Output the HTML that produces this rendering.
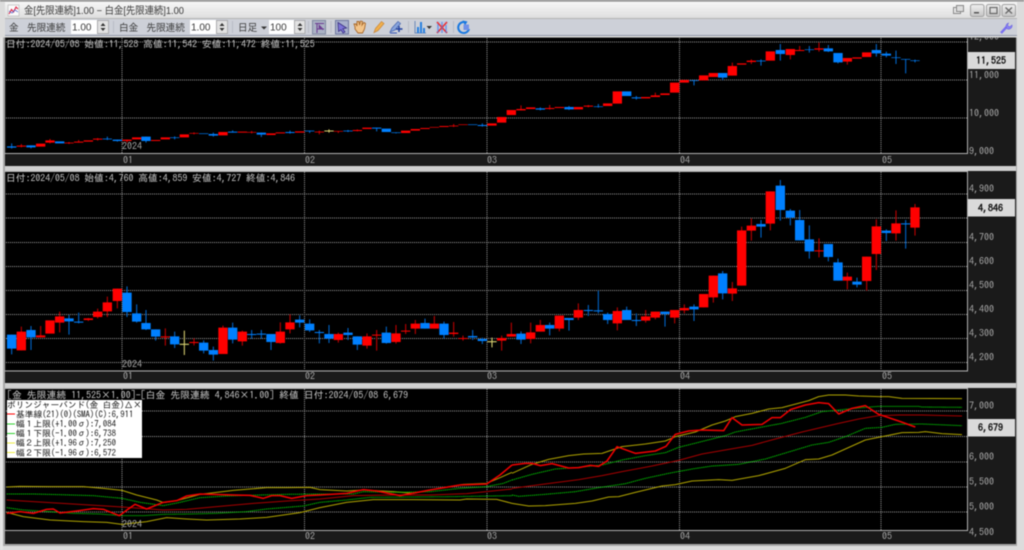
<!DOCTYPE html>
<html lang="ja"><head><meta charset="utf-8"><title>金[先限連続]1.00 − 白金[先限連続]1.00</title>
<style>
html,body{margin:0;padding:0;background:#d8d8d8;width:1024px;height:550px;overflow:hidden}
svg{display:block;filter:blur(.4px)}
.m{font-family:"IPAGothic","Noto Sans CJK JP",monospace;font-size:9.8px;fill:#c8c8c8}
.a{font-family:"IPAGothic","Noto Sans CJK JP",monospace;font-size:10px;fill:#a8a8a8}
.t{font-family:"IPAGothic","Noto Sans CJK JP",monospace;font-size:10px;font-weight:bold;fill:#111}
.u{font-family:"Liberation Sans","Noto Sans CJK JP",sans-serif;font-size:9.6px;fill:#3a3a3a}
.l{font-family:"IPAGothic","Noto Sans CJK JP",monospace;font-size:8.7px;fill:#111}
.g{stroke:#9a9a9a;stroke-width:1;stroke-dasharray:1 1;fill:none}
.rb,.bb,.yw{fill:none}
.rb{stroke:#f00;stroke-width:28}
.bb{stroke:#0080ff;stroke-width:28}
.rw{stroke:#c00000;stroke-width:3.2;fill:none}
.bw{stroke:#0066cc;stroke-width:3.2;fill:none}
.yw{stroke:#d8d070;stroke-width:3.2}
.ln{fill:none;stroke-width:3.1;stroke-linejoin:round}
</style></head><body>
<svg width="1024" height="550" viewBox="0 0 1024 550" xmlns="http://www.w3.org/2000/svg">
<defs><linearGradient id="tb" x1="0" y1="0" x2="0" y2="1"><stop offset="0" stop-color="#f6f6f6"/><stop offset="1" stop-color="#dedede"/></linearGradient>
<linearGradient id="btn" x1="0" y1="0" x2="0" y2="1"><stop offset="0" stop-color="#f0f0f0"/><stop offset="1" stop-color="#c4c4c4"/></linearGradient></defs>
<rect width="1024" height="550" fill="#dcdcdc"/>
<rect x="0" y="0" width="3" height="550" fill="#e4e4e4"/>
<rect x="3" y="36" width="3" height="510" fill="#a8a8a8"/>
<rect x="1015" y="36" width="2" height="510" fill="#a8a8a8"/>
<rect x="4" y="544" width="1013" height="2" fill="#a8a8a8"/>

<!-- Panels dark backing -->
<rect x="5" y="37" width="1011" height="129" fill="#1a1a1a"/>
<rect x="5" y="171" width="1011" height="212" fill="#1a1a1a"/>
<rect x="5" y="388" width="1011" height="156" fill="#1a1a1a"/>
<rect x="5" y="166" width="1011" height="5" fill="#d0d0d0"/>
<rect x="5" y="383" width="1011" height="5" fill="#d0d0d0"/>

<!-- axis labels -->
<g class="a">
<text x="969" y="40">12,000</text><text x="969" y="78.5">11,000</text><text x="969" y="116.5">10,000</text><text x="969" y="154.5">9,000</text>
<text x="969" y="192">4,900</text><text x="969" y="240.5">4,700</text><text x="969" y="264.5">4,600</text><text x="969" y="288.5">4,500</text><text x="969" y="312.5">4,400</text><text x="969" y="336.5">4,300</text><text x="969" y="360.5">4,200</text>
<text x="969" y="409">7,000</text><text x="969" y="460">6,000</text><text x="969" y="485">5,500</text><text x="969" y="510">5,000</text><text x="969" y="535.5">4,500</text>
<text x="123" y="163.5">01</text><text x="305" y="163.5">02</text><text x="487" y="163.5">03</text><text x="680" y="163.5">04</text><text x="882" y="163.5">05</text>
<text x="123" y="379.5">01</text><text x="305" y="379.5">02</text><text x="487" y="379.5">03</text><text x="680" y="379.5">04</text><text x="882" y="379.5">05</text>
<text x="123" y="539.5">01</text><text x="305" y="539.5">02</text><text x="487" y="539.5">03</text><text x="680" y="539.5">04</text><text x="882" y="539.5">05</text>
</g>

<!-- Plot areas -->
<rect x="6" y="38" width="961" height="115" fill="#000"/>
<rect x="6" y="172" width="961" height="198" fill="#000"/>
<rect x="6" y="389" width="961" height="141" fill="#000"/>
<path d="M5 153.5H967.5V38" fill="none" stroke="#b0b0b0"/>
<path d="M5 371H967.5V171.5H5" fill="none" stroke="#b0b0b0"/>
<path d="M5 530.5H967.5V388.5H5" fill="none" stroke="#b0b0b0"/>

<!-- grid -->
<path class="g" d="M6 42H967M6 80H967M6 118H967M122 38V153M304.500 38V153M487 38V153M679.500 38V153M881 38V153"/>
<path class="g" d="M6 194H967M6 218H967M6 242.500H967M6 266.500H967M6 290.500H967M6 314.500H967M6 338.500H967M6 362.500H967M122 172V370M304.500 172V370M487 172V370M679.500 172V370M881 172V370"/>
<path class="g" d="M6 411H967M6 436.500H967M6 462H967M6 487H967M6 512H967M122 389V530M304.500 389V530M487 389V530M679.500 389V530M881 389V530"/>

<!-- Panel 1 candles left -->
<g transform="translate(0,60) scale(.33333)">
<path class="rw" d="M64 252V262M150 237V250M207 246V252M236 240V248M293 234V242M381 239V248M582 217V223M755 213V220M958 212V223M1015 213V219M1072 208V214M1361 192V201"/>
<path class="bw" d="M35 250V266M93 256V265M322 230V240M352 239V245M438 230V248M524 229V238M640 218V230M698 211V218M784 218V231M870 212V221M929 212V219M1044 210V216M1130 203V214M1447 190V200M1188 217V220"/>
<path class="rb" d="M64 257V260M122 251V260M150 241V248M207 248V250M236 245V248M265 241V245M293 236V239M381 239V243M410 232V238M467 240V243M496 232V238M553 223V232M582 219V221M669 216V226M727 215V218M755 216V218M813 220V225M841 217V220M899 214V218M958 215V217M1015 213V215M1072 210V213M1101 203V207M1217 212V219M1246 207V212M1275 204V207M1303 201V203M1332 198V201M1361 197V199M1389 193V195M1476 190V197M1505 171V188M1534 150V165"/>
<path class="bb" d="M35 259V263M93 256V262M179 244V250M322 236V238M352 239V243M438 230V243M524 232V234M611 220V222M640 222V227M698 215V218M784 218V224M870 216V219M929 212V214M1044 212V214M1130 203V206M1159 206V216M1188 217V219M1418 193V195M1447 195V198"/>
<path class="yw" d="M987 208V218M973 213H1001"/>
</g>
<!-- Panel 1 candles right -->
<g transform="translate(512,0) scale(.33333)">
<path class="rw" d="M27 316V331M113 315V329M229 315V322M430 278V291M661 188V227M718 178V192M835 147V178M863 138V153M921 128V155M1006 174V194"/>
<path class="bw" d="M85 322V331M171 318V330M259 312V323M373 288V299M546 240V256M632 219V240M747 178V197M805 132V182M892 138V158M949 135V156M978 159V190M1093 132V170M1123 155V172M1152 152V192M1181 177V220M1209 179V187"/>
<path class="rb" d="M27 327V331M56 322V327M113 324V327M142 321V324M199 321V328M229 317V320M287 310V318M316 274V311M401 291V295M430 286V291M459 280V285M488 248V278M517 240V248M575 226V241M604 219V231M661 198V227M689 190V194M718 182V186M775 154V182M835 147V165M863 150V153M921 145V149M1006 174V185M1035 172V176M1064 157V171"/>
<path class="bb" d="M85 325V329M171 321V328M259 319V321M344 274V288M373 292V295M546 241V243M632 219V233M747 182V184M805 150V162M892 148V150M949 145V154M978 159V187M1093 150V160M1123 161V167M1152 172V174M1181 177V179M1209 181V183"/>
</g>

<!-- Panel 2 candles left -->
<g transform="translate(0,170) scale(.33333)">
<path class="rw" d="M64 470V541M122 468V502M179 425V487M265 444V453M293 416V445M322 380V441M352 356V415M496 475V527M582 505V526M669 467V552M727 482V527M841 457V521M870 433V490M1015 488V518M1101 490V536M1130 480V542M1188 465V521M1217 462V492M1246 450V492M1303 438V476M1361 456V500M1389 497V512M1505 497V542M1534 458V500"/>
<path class="bw" d="M35 494V553M93 468V540M207 435V494M236 428V460M381 349V441M410 403V458M438 420V480M467 478V512M524 485V534M611 511V550M640 530V572M698 458V520M755 480V506M784 480V506M813 492V540M899 436V472M929 448V486M958 480V520M987 465V519M1044 474V510M1072 499V540M1159 470V521M1275 446V476M1332 455V505M1418 480V510M1447 503V522"/>
<path class="rb" d="M64 485V541M122 496V502M150 451V491M179 439V458M265 445V450M293 425V441M322 397V424M352 356V393M496 499V502M582 516V519M669 473V552M727 485V514M841 485V519M870 457V478M1015 492V510M1101 499V527M1130 494V497M1188 490V516M1217 482V485M1246 461V476M1303 461V476M1361 488V492M1389 504V507M1505 504V512M1534 492V500"/>
<path class="bb" d="M35 494V536M93 480V502M207 445V454M236 455V458M381 368V426M410 430V455M438 459V478M467 478V500M524 499V523M611 518V542M640 540V554M698 473V509M755 492V495M784 491V494M813 492V516M899 449V458M929 461V481M958 486V489M987 492V506M1044 488V495M1072 499V524M1159 488V519M1275 459V476M1332 461V495M1418 498V502M1447 507V513"/>
<path class="yw" d="M553 482V555M539 523H567M1476 503V532M1462 515H1490"/>
</g>
<!-- Panel 2 candles right -->
<g transform="translate(512,170) scale(.33333)">
<path class="rw" d="M56 458V520M85 450V485M142 437V484M199 400V450M316 412V481M401 420V458M430 425V448M488 420V460M517 403V430M575 372V412M604 317V398M661 336V393M689 170V347M718 145V212M775 64V181M921 205V262M1006 308V358M1064 260V362M1093 148V300M1152 121V212M1209 102V197"/>
<path class="bw" d="M27 484V522M113 458V496M171 444V482M229 405V438M259 362V430M287 428V462M344 410V450M373 430V468M459 425V470M546 403V453M632 303V388M747 150V203M805 30V152M835 117V166M863 120V211M892 166V266M949 222V274M978 266V332M1035 323V352M1123 178V213M1181 150V236"/>
<path class="rb" d="M56 487V507M85 465V485M142 437V476M199 420V443M316 423V460M401 439V452M430 425V443M488 420V443M517 414V421M575 372V412M604 317V382M661 355V371M689 181V347M718 167V182M775 64V161M921 241V244M1006 320V332M1064 260V333M1093 169V252M1152 160V190M1209 112V173"/>
<path class="bb" d="M27 491V509M113 465V476M171 444V450M229 420V423M259 421V424M287 432V450M344 420V450M373 450V453M459 425V432M546 410V418M632 310V370M747 162V170M805 47V120M835 122V143M863 150V211M892 208V244M949 222V261M978 277V332M1035 335V344M1123 182V189M1181 160V163"/>
</g>

<!-- Panel 3 lines left -->
<g transform="translate(0,385) scale(.33333)">
<polyline class="ln" stroke="#b0a400" points="20,306 60,304 150,305 250,305 310,310 366,316 410,330 470,345 490,353 530,347 600,328 650,322 700,316 750,312 800,308 860,308 930,307 960,314 1040,318 1090,315 1180,320 1240,325 1290,315 1350,305 1390,298 1460,295 1500,278 1536,262"/>
<polyline class="ln" stroke="#b0a400" points="20,382 70,395 150,405 250,410 320,412 366,418 440,410 500,398 560,402 620,405 720,402 800,397 900,383 960,368 1040,352 1120,344 1240,344 1380,345 1400,342 1490,343 1536,355"/>
<polyline class="ln" stroke="#00c000" stroke-dasharray="4 2" points="20,327 100,327 180,329 280,332 366,340 420,352 490,362 540,352 600,338 680,333 780,330 860,328 960,327 1060,327 1090,320 1180,322 1290,320 1380,310 1460,305 1510,295 1536,285"/>
<polyline class="ln" stroke="#00c000" stroke-dasharray="4 2" points="20,368 70,375 150,380 220,385 300,387 366,392 430,392 490,388 570,387 650,385 740,380 800,372 910,363 960,352 1040,345 1110,337 1230,336 1350,335 1536,332"/>
<polyline class="ln" stroke="#a80000" points="20,345 100,350 200,356 300,362 366,366 490,375 560,373 650,365 760,355 860,348 960,342 1060,332 1180,330 1290,330 1400,326 1536,312"/>
<polyline class="ln" stroke="#f00000" style="stroke-width:4.6" points="20,385 60,380 100,385 140,373 160,372 180,384 230,378 280,371 310,373 358,392 385,372 405,358 440,372 490,352 530,347 560,333 600,327 700,330 750,331 790,340 815,332 840,332 875,340 920,332 960,330 1040,325 1090,314 1130,318 1200,332 1290,315 1380,300 1460,297 1500,270 1536,240"/>
</g>
<!-- Panel 3 lines right -->
<g transform="translate(512,385) scale(.33333)">
<polyline class="ln" stroke="#b0a400" points="0,265 60,238 110,223 170,212 215,207 270,205 330,185 400,177 460,168 490,155 550,141 600,120 640,108 670,95 720,85 770,72 810,68 840,60 890,47 920,35 950,30 1000,30 1040,33 1100,35 1130,35 1170,40 1350,41"/>
<polyline class="ln" stroke="#b0a400" points="0,355 50,363 100,362 190,355 240,348 290,336 320,335 370,322 450,303 490,299 540,288 620,284 660,286 740,272 820,250 880,224 920,222 960,210 1060,165 1110,155 1170,143 1220,142 1240,140 1290,146 1350,149"/>
<polyline class="ln" stroke="#00c000" stroke-dasharray="4 2" points="0,285 60,268 130,252 190,248 270,240 330,225 400,212 460,203 500,187 560,172 640,152 670,141 740,128 810,115 880,97 930,80 980,75 1050,68 1100,64 1220,64 1230,66 1350,67"/>
<polyline class="ln" stroke="#00c000" stroke-dasharray="4 2" points="0,330 20,334 100,328 190,320 260,308 340,296 400,280 470,265 540,252 600,243 680,238 760,222 840,198 900,180 950,172 1000,155 1060,130 1110,127 1150,118 1230,117 1350,122"/>
<polyline class="ln" stroke="#a80000" points="0,310 90,298 200,284 270,272 330,260 420,243 500,226 570,207 650,193 720,181 790,162 870,141 980,115 1040,102 1100,92 1160,90 1230,90 1350,93"/>
<polyline class="ln" stroke="#f00000" style="stroke-width:4.6" points="0,240 40,235 60,235 85,242 120,236 170,249 200,248 235,241 260,244 285,228 315,185 370,205 430,198 462,184 490,148 530,138 570,135 635,137 660,98 690,120 750,118 780,98 805,98 835,74 880,60 920,53 950,56 980,87 1020,70 1060,62 1100,88 1160,108 1210,126"/>
</g>

<!-- 2024 labels -->
<g class="a"><text x="122" y="149.500">2024</text><text x="122" y="367.500">2024</text><text x="122" y="527.500">2024</text></g>

<!-- header text -->
<g class="m">
<text x="6" y="47.500">日付:2024/05/08 始値:11,528 高値:11,542 安値:11,472 終値:11,525</text>
<text x="6" y="181.500">日付:2024/05/08 始値:4,760 高値:4,859 安値:4,727 終値:4,846</text>
<text x="7" y="398.500" textLength="401" lengthAdjust="spacing">[金 先限連続 11,525×1.00]−[白金 先限連続 4,846×1.00] 終値 日付:2024/05/08 6,679</text>
</g>

<!-- legend -->
<rect x="7" y="400" width="135" height="58" fill="#fff"/>
<path d="M7 414H15" stroke="#f00"/><path d="M7 424H15M7 433.500H15" stroke="#30d030"/><path d="M7 443H15M7 452.500H15" stroke="#ecec40"/>
<g class="l">
<text x="7" y="408">ボリンジャーバンド(金 白金)△×</text>
<text x="16" y="417.500">基準線(21)(0)(SMA)(C):6,911</text>
<text x="16" y="427">幅１上限(+1.00σ):7,084</text>
<text x="16" y="436.500">幅１下限(-1.00σ):6,738</text>
<text x="16" y="446">幅２上限(+1.96σ):7,250</text>
<text x="16" y="456">幅２下限(-1.96σ):6,572</text>
</g>

<!-- price tags -->
<rect x="968" y="52" width="47" height="17" fill="#dadada"/><text class="t" x="976" y="64">11,525</text>
<rect x="968" y="199" width="47" height="17.500" fill="#dadada"/><text class="t" x="978" y="211.500">4,846</text>
<rect x="968" y="419" width="47" height="17.500" fill="#dadada"/><text class="t" x="978" y="431">6,679</text>

<!-- title bar -->
<rect x="0" y="0" width="1024" height="37.500" fill="#dcdcdc"/>
<rect x="0" y="0" width="1024" height="1.500" fill="#8e8e8e"/>
<rect x="5" y="2" width="1012" height="16.500" fill="url(#tb)"/>
<path d="M5 18.500H1017" stroke="#b4b4b4"/>
<rect x="8" y="5" width="11" height="11" fill="#fafafa" stroke="#b0b0b0" stroke-width=".6"/>
<path d="M9 14L11.500 9.500L13.500 12L16 7L18 9" fill="none" stroke="#e02040" stroke-width="1.100"/>
<path d="M9 11L12 13L15 10L18 12" fill="none" stroke="#4060d0" stroke-width=".7"/>
<text class="u" x="24" y="13.800" style="font-size:10px" textLength="160" lengthAdjust="spacingAndGlyphs">金[先限連続]1.00 − 白金[先限連続]1.00</text>
<!-- window buttons -->
<rect x="953.500" y="7.500" width="7" height="6" fill="none" stroke="#888"/><rect x="956.500" y="5.500" width="7" height="6" fill="#ddd" stroke="#888"/>
<rect x="970.500" y="4.500" width="13.500" height="12" rx="2" fill="url(#btn)" stroke="#a0a0a0"/>
<rect x="974" y="12" width="5" height="1.500" fill="#555"/>
<rect x="986.500" y="4.500" width="13.500" height="12" rx="2" fill="url(#btn)" stroke="#a0a0a0"/>
<rect x="990" y="7.500" width="7" height="6" fill="none" stroke="#666" stroke-width="1.200"/>
<rect x="1002" y="4.500" width="13.500" height="12" rx="2" fill="url(#btn)" stroke="#a0a0a0"/>
<path d="M1005.500 7.500L1012 13.500M1012 7.500L1005.500 13.500" stroke="#666" stroke-width="1.300"/>

<!-- toolbar -->
<rect x="5" y="19" width="1012" height="16" fill="#cdd0d8"/>
<path d="M5 35.500H1017" stroke="#8f96a6"/>
<g class="u">
<text x="9" y="31">金</text><text x="27" y="31">先限連続</text>
<text x="119" y="31">白金</text><text x="146.500" y="31">先限連続</text>
<text x="238" y="31">日足</text>
</g>
<g fill="#fff"><rect x="71" y="20" width="26" height="14"/><rect x="190" y="20" width="26" height="14"/><rect x="269" y="20" width="25" height="14"/></g>
<g class="u"><text x="72" y="30.500" style="font-size:10px">1.00</text><text x="191" y="30.500" style="font-size:10px">1.00</text><text x="270" y="30.500" style="font-size:10px">100</text></g>
<g fill="#e2e2e2" stroke="#9a9a9a" stroke-width=".7"><rect x="97.500" y="20.500" width="11" height="13"/><rect x="216.500" y="20.500" width="11" height="13"/><rect x="294.500" y="20.500" width="10.500" height="13"/></g>
<g fill="#333"><path d="M100.500 26l2.500-3 2.500 3zM100.500 28l2.500 3 2.500-3zM219.500 26l2.500-3 2.500 3zM219.500 28l2.500 3 2.500-3zM297.500 26l2.500-3 2.500 3zM297.500 28l2.500 3 2.500-3z"/><path d="M261 26.500h6l-3 3z"/><path d="M426.500 26h5.500l-2.750 3z"/></g>
<path d="M113.500 21V33M232.500 21V33M308.500 21V33M331 21V33M408.500 21V33M453.500 21V33" stroke="#b8bcc6"/>
<!-- toggle icon -->
<rect x="312.500" y="20.500" width="13" height="13.500" fill="#aab2c4" stroke="#8088a0"/>
<path d="M315 23.500H324M317 23V33M317 29H324" stroke="#6a3a90" stroke-width="1"/>
<path d="M319 25L323 30M319 25v3h3z" stroke="#6a3a90" fill="#6a3a90" stroke-width=".7"/>
<!-- pointer -->
<rect x="335.500" y="20.500" width="13" height="13.500" fill="#a8b0cc" stroke="#7078a0"/>
<path d="M338 22.500L346.500 28L342.800 28.800L345 32L343 33L341 29.800L338.500 31.500Z" fill="#7d74d8" stroke="#3a3080" stroke-width=".8"/>
<!-- hand -->
<path d="M355 27L354 24L356 24L357 26L357 21.500L359 21.500L359.500 25L360.500 21L362.500 21.500L362 25L364 22.500L365.500 23.500L364.500 29L362.500 33H358L355 29Z" fill="#f3c48a" stroke="#a8682a" stroke-width=".9"/>
<!-- pencil -->
<path d="M374 32.500L375.500 28.500L381.500 21.500L384 23.500L378 30.500Z" fill="#f2b04c" stroke="#c88a40" stroke-width=".8"/>
<!-- pen blue -->
<path d="M390 32L392 28L398 21.500L400.500 23.500L395 30Z" fill="#88a4dc" stroke="#4a68b0" stroke-width=".8"/>
<path d="M399 26V32M396 29H402.500" stroke="#2040a0" stroke-width="1.500"/>
<path d="M390 33H397" stroke="#3050b0"/>
<!-- bars -->
<path d="M415 21V33H426" fill="none" stroke="#6a88b8"/>
<path d="M417 33V27h2v6zM420 33V22h2v11zM423 33V28h2v5z" fill="#2880e0"/>
<!-- X chart -->
<rect x="436" y="21" width="12" height="12" fill="#bcc8e0"/>
<path d="M437 22L447 33M447 22L437 33" stroke="#f03030" stroke-width="1.600"/>
<path d="M438 24V33M442 22V33M446 25V33" stroke="#4878e0" stroke-width=".8"/>
<!-- rotate -->
<path d="M466 22.500A5.500 5.500 0 1 0 469 29" fill="none" stroke="#1878e0" stroke-width="2"/>
<path d="M462.500 20.500L467.500 21.500L465 25.500Z" fill="#1878e0"/>
<rect x="463.500" y="24.500" width="5.500" height="5.500" fill="#7090e8"/>
<!-- wrench -->
<path d="M1001 33L1007 26.500" stroke="#7a70f0" stroke-width="2.400"/>
<path d="M1006 27A3.500 3.500 0 0 1 1008.500 23L1007.500 25.500L1009.500 27L1012 25A3.500 3.500 0 0 1 1007.500 29Z" fill="#8a84f4" stroke="#6a60e0" stroke-width=".6"/>
</svg>
</body></html>
